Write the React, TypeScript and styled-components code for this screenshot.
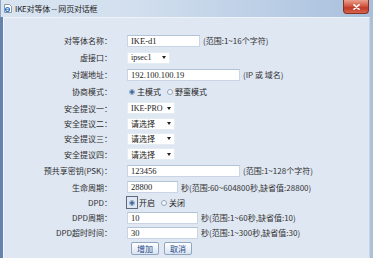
import React from 'react';
import styled, { createGlobalStyle } from 'styled-components';

const GlobalStyle = createGlobalStyle`
  html, body {
    margin: 0;
    padding: 0;
    background: #dfe7f2;
  }
  * {
    box-sizing: border-box;
  }
`;

const cjk = `"Noto Sans CJK SC", "Noto Sans", sans-serif`;

const Window = styled.div`
  width: 373px;
  height: 258px;
  display: flex;
  flex-direction: column;
  overflow: hidden;
  font-family: ${cjk};
`;

const TitleBar = styled.div`
  height: 17px;
  flex: none;
  display: flex;
  align-items: center;
  padding-left: 3px;
  background: linear-gradient(90deg, #d9e4f1 0%, #d2dfee 35%, #bccfe6 70%, #a7bfdc 100%);
  border-left: 1px solid #8ea6c6;
`;

const Title = styled.span`
  margin-left: 3px;
  font-size: 8px;
  color: #1c1c1c;
  letter-spacing: -0.2px;
`;

const CloseButton = styled.div`
  margin-left: auto;
  margin-right: 4px;
  align-self: flex-start;
  width: 26px;
  height: 14px;
  border-radius: 0 0 4px 4px;
  border: 1px solid #8b2f25;
  border-top: none;
  background: linear-gradient(180deg, #e8a08e 0%, #d45a45 45%, #c03a28 60%, #d6654c 100%);
  display: flex;
  align-items: center;
  justify-content: center;
`;

const Body = styled.div`
  flex: 1;
  display: flex;
  border-left: 3px solid #6583ab;
  border-right: 3px solid #aec0d6;
`;

const Content = styled.div`
  flex: 1;
  border-left: 1px solid #f2f6fa;
  border-top: 1px solid #eef3f8;
  border-right: 1px solid #c9d6e6;
  background: #dfe7f2;
  padding-top: 14px;
`;

const Row = styled.div<{ h: number }>`
  height: ${({ h }) => h}px;
  display: grid;
  grid-template-columns: 108px 1fr;
  column-gap: 15px;
  align-items: center;
`;

const Label = styled.div`
  text-align: right;
  font-size: 8px;
  color: #2e2e2e;
  white-space: nowrap;
`;

const Control = styled.div`
  display: flex;
  align-items: center;
  gap: 3px;
`;

const Input = styled.input<{ w: number }>`
  width: ${({ w }) => w}px;
  height: 12px;
  padding: 0 3px;
  border: 1px solid #c9d5e4;
  border-top-color: #b3c2d5;
  background: #fff;
  font-family: "Liberation Serif", serif;
  font-size: 8.5px;
  color: #222;
  outline: none;
`;

const Select = styled.div<{ w: number; serif?: boolean }>`
  width: ${({ w }) => w}px;
  height: 12px;
  display: flex;
  align-items: center;
  padding: 0 3px;
  background: #fff;
  border: 1px solid #e6ecf4;
  font-family: ${({ serif }) => (serif ? `"Liberation Serif", serif` : cjk)};
  font-size: 8px;
  color: #222;
`;

const Arrow = styled.span`
  margin-left: auto;
  width: 0;
  height: 0;
  border-left: 2px solid transparent;
  border-right: 2px solid transparent;
  border-top: 3px solid #222;
`;

const Hint = styled.span`
  font-size: 8px;
  color: #333;
  white-space: nowrap;
`;

const RadioGroup = styled.div`
  display: flex;
  align-items: center;
  padding-left: 2px;
`;

const RadioItem = styled.label<{ focused?: boolean }>`
  display: flex;
  align-items: center;
  gap: 2px;
  margin-right: 6px;
  font-size: 8px;
  color: #222;
`;

const RadioWrap = styled.span<{ focused?: boolean }>`
  display: flex;
  align-items: center;
  justify-content: center;
  width: ${({ focused }) => (focused ? '10px' : '6px')};
  height: ${({ focused }) => (focused ? '11px' : '6px')};
  margin-left: ${({ focused }) => (focused ? '-2px' : '0')};
  outline: ${({ focused }) => (focused ? '1px solid #5a6b80' : 'none')};
`;

const RadioDot = styled.span<{ checked?: boolean }>`
  width: 6px;
  height: 6px;
  border-radius: 50%;
  border: 1px solid #95a6bb;
  background: ${({ checked }) =>
    checked ? 'radial-gradient(circle, #3c6aa6 0 1.5px, #eef3f9 2px)' : '#f4f7fb'};
`;

const ButtonRow = styled.div`
  display: flex;
  gap: 5px;
  padding-left: 4px;
`;

const Button = styled.button`
  width: 28px;
  height: 13px;
  padding: 0;
  border: 1px solid #8fa6c2;
  border-radius: 2px;
  background: linear-gradient(180deg, #ffffff 0%, #eef2f8 50%, #d9e2ee 100%);
  font-family: ${cjk};
  font-size: 8px;
  color: #234a8a;
  line-height: 11px;
`;

function PageIcon() {
  return (
    <svg width='8' height='9' viewBox='0 0 8 9'>
      <path d='M0.5 0.5h5l2 2v6h-7z' fill='#fff' stroke='#8a96a6' strokeWidth='1' />
      <circle cx='3.5' cy='5.5' r='2' fill='none' stroke='#2f78c8' strokeWidth='1.1' />
      <path d='M1.6 5.3h3.8' stroke='#2f78c8' strokeWidth='0.9' />
    </svg>
  );
}

function CloseIcon() {
  return (
    <svg width='7' height='6' viewBox='0 0 7 6'>
      <path d='M1 0.8l5 4.4M6 0.8l-5 4.4' stroke='#fff' strokeWidth='1.6' strokeLinecap='round' />
    </svg>
  );
}

function Radio({ label, checked, focused }: { label: string; checked?: boolean; focused?: boolean }) {
  return (
    <RadioItem>
      <RadioWrap focused={focused}>
        <RadioDot checked={checked} />
      </RadioWrap>
      {label}
    </RadioItem>
  );
}

function App() {
  return (
    <>
      <GlobalStyle />
      <Window>
        <TitleBar>
          <PageIcon />
          <Title>IKE对等体 -- 网页对话框</Title>
          <CloseButton>
            <CloseIcon />
          </CloseButton>
        </TitleBar>
        <Body>
          <Content>
            <Row h={17}>
              <Label>对等体名称：</Label>
              <Control>
                <Input w={73} defaultValue='IKE-d1' />
                <Hint>(范围:1~16个字符)</Hint>
              </Control>
            </Row>
            <Row h={17}>
              <Label>虚接口：</Label>
              <Control>
                <Select w={43} serif>
                  ipsec1
                  <Arrow />
                </Select>
              </Control>
            </Row>
            <Row h={17}>
              <Label>对端地址：</Label>
              <Control>
                <Input w={113} defaultValue='192.100.100.19' />
                <Hint>(IP 或 域名)</Hint>
              </Control>
            </Row>
            <Row h={17}>
              <Label>协商模式：</Label>
              <RadioGroup>
                <Radio label='主模式' checked />
                <Radio label='野蛮模式' />
              </RadioGroup>
            </Row>
            <Row h={16}>
              <Label>安全提议一：</Label>
              <Control>
                <Select w={48} serif>
                  IKE-PRO
                  <Arrow />
                </Select>
              </Control>
            </Row>
            <Row h={15}>
              <Label>安全提议二：</Label>
              <Control>
                <Select w={48}>
                  请选择
                  <Arrow />
                </Select>
              </Control>
            </Row>
            <Row h={15}>
              <Label>安全提议三：</Label>
              <Control>
                <Select w={48}>
                  请选择
                  <Arrow />
                </Select>
              </Control>
            </Row>
            <Row h={16}>
              <Label>安全提议四：</Label>
              <Control>
                <Select w={48}>
                  请选择
                  <Arrow />
                </Select>
              </Control>
            </Row>
            <Row h={17}>
              <Label>预共享密钥(PSK)：</Label>
              <Control>
                <Input w={113} defaultValue='123456' />
                <Hint>(范围:1~128个字符)</Hint>
              </Control>
            </Row>
            <Row h={16}>
              <Label>生命周期：</Label>
              <Control>
                <Input w={51} defaultValue='28800' />
                <Hint>秒(范围:60~604800秒,缺省值:28800)</Hint>
              </Control>
            </Row>
            <Row h={15}>
              <Label>DPD：</Label>
              <RadioGroup>
                <Radio label='开启' checked focused />
                <Radio label='关闭' />
              </RadioGroup>
            </Row>
            <Row h={15}>
              <Label>DPD周期：</Label>
              <Control>
                <Input w={71} defaultValue='10' />
                <Hint>秒(范围:1~60秒,缺省值:10)</Hint>
              </Control>
            </Row>
            <Row h={15}>
              <Label>DPD超时时间：</Label>
              <Control>
                <Input w={71} defaultValue='30' />
                <Hint>秒(范围:1~300秒,缺省值:30)</Hint>
              </Control>
            </Row>
            <Row h={16}>
              <span />
              <ButtonRow>
                <Button>增加</Button>
                <Button>取消</Button>
              </ButtonRow>
            </Row>
          </Content>
        </Body>
      </Window>
    </>
  );
}

export default App;
